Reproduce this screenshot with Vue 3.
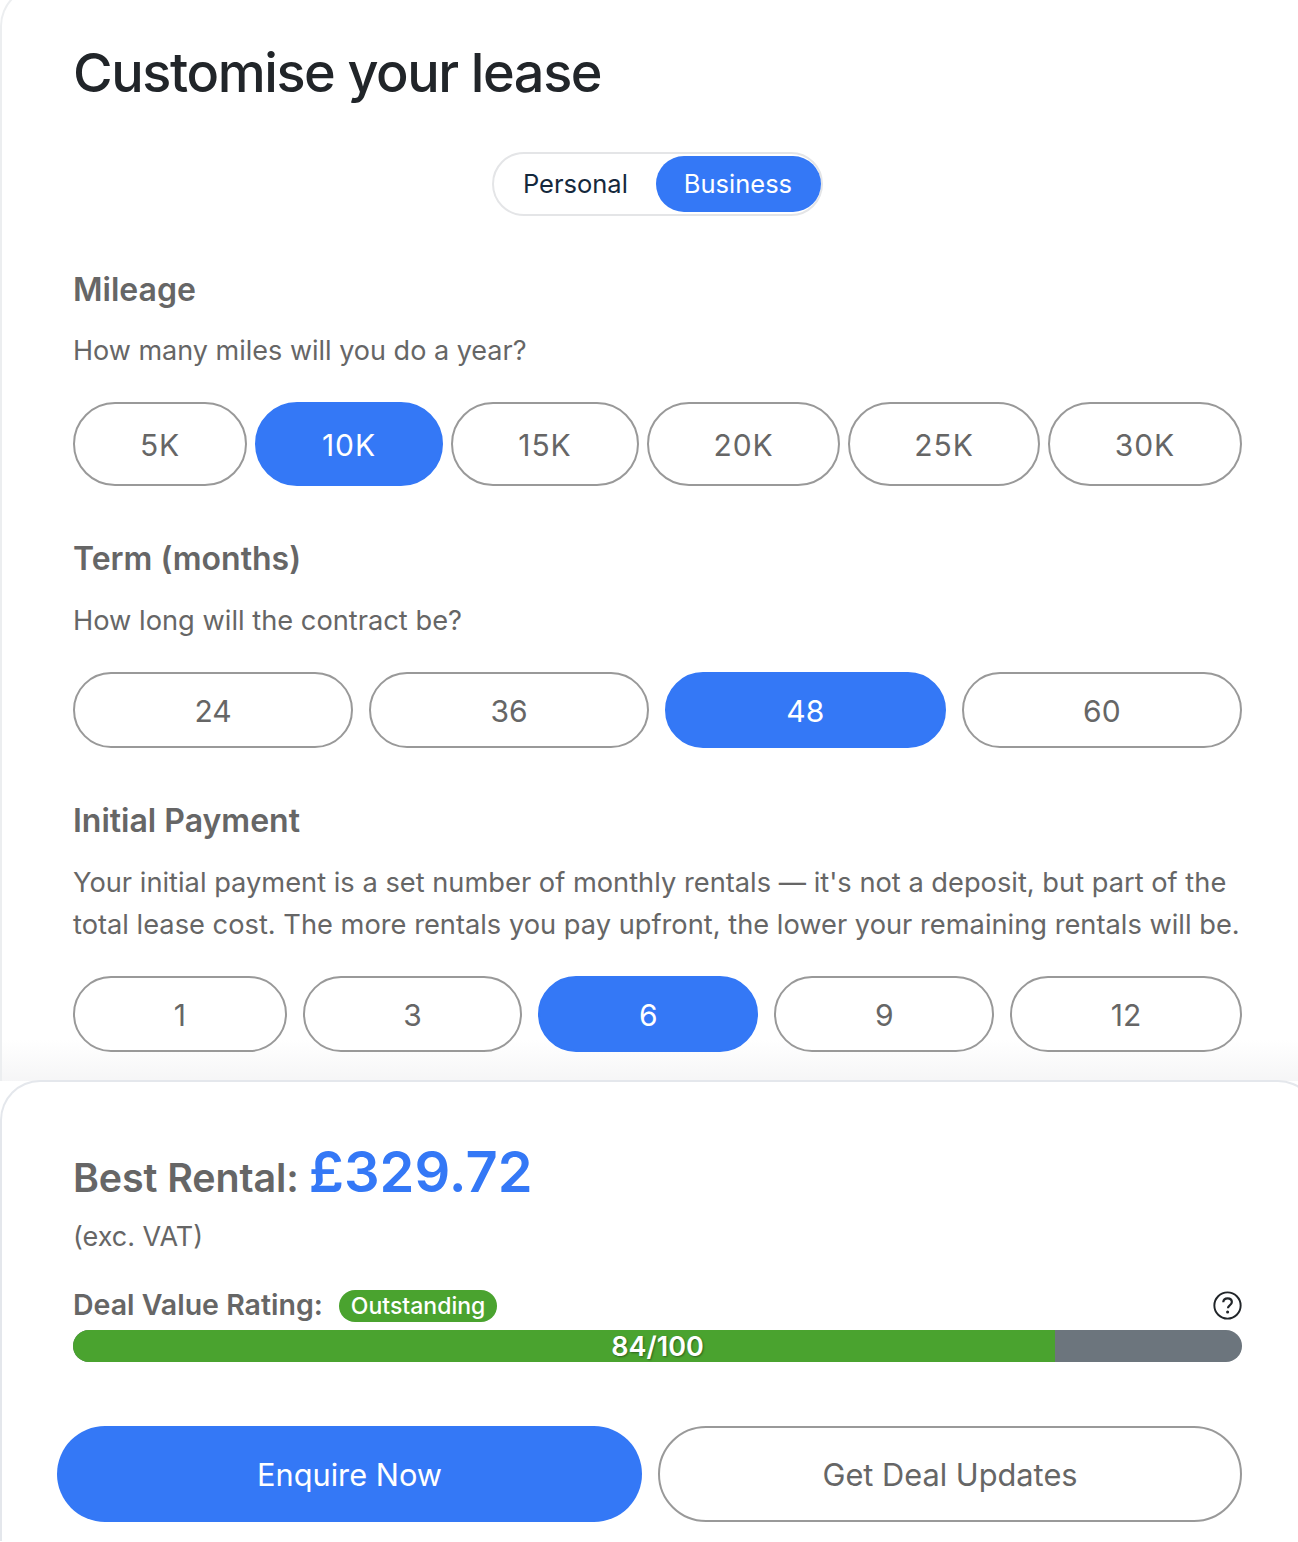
<script setup>
const mileage = [['5K', false], ['10K', true], ['15K', false], ['20K', false], ['25K', false], ['30K', false]]
const term = [['24', false], ['36', false], ['48', true], ['60', false]]
const initial = [['1', false], ['3', false], ['6', true], ['9', false], ['12', false]]
</script>

<template>
  <div class="page">
    <section class="card">
      <h1 class="title">Customise your lease</h1>
      <div class="toggle-wrap">
        <div class="toggle">
          <span class="tog">Personal</span>
          <span class="tog on">Business</span>
        </div>
      </div>

      <h2 class="label first">Mileage</h2>
      <p class="desc tight">How many miles will you do a year?</p>
      <div class="row mileage">
        <button v-for="o in mileage" :key="o[0]" class="pill" :class="{ active: o[1] }">{{ o[0] }}</button>
      </div>

      <h2 class="label next">Term (months)</h2>
      <p class="desc">How long will the contract be?</p>
      <div class="row even">
        <button v-for="o in term" :key="o[0]" class="pill short" :class="{ active: o[1] }">{{ o[0] }}</button>
      </div>

      <h2 class="label next">Initial Payment</h2>
      <p class="desc">Your initial payment is a set number of monthly rentals — it's not a deposit, but part of the total lease cost. The more rentals you pay upfront, the lower your remaining rentals will be.</p>
      <div class="row even">
        <button v-for="o in initial" :key="o[0]" class="pill short" :class="{ active: o[1] }">{{ o[0] }}</button>
      </div>
    </section>

    <section class="summary">
      <div class="price-line">
        <span class="best">Best Rental:</span>
        <span class="price">£329.72</span>
      </div>
      <div class="vat">(exc. VAT)</div>
      <div class="rating-line">
        <span class="rating-label">Deal Value Rating:</span>
        <span class="badge">Outstanding</span>
        <svg class="help" viewBox="0 0 30 30" width="29" height="29" aria-hidden="true">
          <circle cx="15" cy="15" r="13.6" fill="none" stroke="#212529" stroke-width="2" />
          <path d="M10.6 11.6c.2-2.6 2.1-4 4.500-4 2.500 0 4.400 1.500 4.400 3.800 0 1.700-.9 2.600-2.200 3.500-1.300.9-1.800 1.500-1.800 3" fill="none" stroke="#212529" stroke-width="2.300" />
          <circle cx="15.100" cy="21.800" r="1.600" fill="#212529" />
        </svg>
      </div>
      <div class="bar">
        <div class="fill"></div>
        <span class="score">84/100</span>
      </div>
      <div class="actions">
        <button class="cta primary">Enquire Now</button>
        <button class="cta ghost">Get Deal Updates</button>
      </div>
    </section>
  </div>
</template>

<style scoped>
.page {
  width: 1298px;
  height: 1542px;
  overflow: hidden;
  background: #fff;
  font-family: Inter, "Liberation Sans", sans-serif;
}
.card {
  height: 1095px;
  box-sizing: border-box;
  margin-top: -14px;
  padding: 14px 56px 0 71px;
  border-left: 2px solid #eceef0;
  border-top: 2px solid #eceef0;
  border-top-left-radius: 40px;
  background: linear-gradient(to bottom, #fff 0, #fff 1052px, #f5f5f6 1095px);
}
.title {
  margin: 0;
  padding-top: 40px;
  font-size: 54px;
  line-height: 62px;
  font-weight: 500;
  letter-spacing: -1.4px;
  color: #212529;
}
.toggle-wrap {
  display: flex;
  justify-content: center;
  margin-top: 48px;
}
.toggle {
  display: flex;
  align-items: center;
  box-sizing: border-box;
  height: 64px;
  border: 2px solid #e4e5e7;
  border-radius: 32px;
  background: #fff;
}
.tog {
  height: 56px;
  line-height: 56px;
  padding: 0 28px 0 29px;
  font-size: 25.5px;
  border-radius: 28px;
  color: #14283c;
}
.tog.on {
  padding: 0 29px 0 28px;
  background: #3478f6;
  color: #fff;
}
.label {
  margin: 0;
  font-size: 32px;
  line-height: 36px;
  font-weight: 600;
  color: #666;
}
.label.first { margin-top: 56px; }
.label.next { margin-top: 55px; }
.desc {
  margin: 23px 0 0;
  font-size: 27.25px;
  line-height: 42px;
  color: #666;
}
.desc.tight {
  margin-top: 22px;
  font-size: 27px;
}
.row {
  display: flex;
  gap: 8px;
  margin-top: 30px;
}
.row.mileage {
  display: grid;
  grid-template-columns: 174fr 188fr 188fr 193fr 192fr 194fr;
}
.row.even { gap: 16px; }
.pill {
  flex: 1 1 auto;
  box-sizing: border-box;
  height: 84px;
  padding: 2px 38px 0;
  border: 2px solid #999;
  border-radius: 42px;
  background: #fff;
  font-family: inherit;
  font-size: 30px;
  letter-spacing: 0.9px;
  color: #666;
}
.pill.short {
  height: 76px;
  padding: 2px 40px 0;
  border-radius: 38px;
  letter-spacing: 0;
}
.pill.active {
  background: #3478f6;
  border-color: #3478f6;
  color: #fff;
}
.summary {
  height: 461px;
  box-sizing: border-box;
  margin: -1px -20px 0 0;
  padding: 0 74px 0 71px;
  border: 2px solid #e4e7ec;
  border-bottom: none;
  border-top-left-radius: 40px;
  border-top-right-radius: 40px;
  background: #fff;
}
.price-line {
  display: flex;
  align-items: baseline;
  gap: 10px;
  padding-top: 56px;
}
.best {
  font-size: 39.4px;
  font-weight: 600;
  letter-spacing: -0.1px;
  color: #666;
}
.price {
  font-size: 56px;
  line-height: 68px;
  font-weight: 600;
  color: #3478f6;
}
.vat {
  margin-top: 13px;
  font-size: 27px;
  line-height: 36px;
  color: #666;
}
.rating-line {
  display: flex;
  align-items: center;
  margin-top: 32px;
  height: 36px;
}
.rating-label {
  margin-bottom: 2px;
  font-size: 28.5px;
  font-weight: 600;
  color: #666;
}
.badge {
  margin: 2px 0 0 16px;
  height: 32px;
  line-height: 32px;
  padding: 0 12px;
  border-radius: 16px;
  background: #4aa32f;
  color: #fff;
  font-size: 23px;
  font-weight: 500;
}
.help {
  margin-left: auto;
}
.bar {
  position: relative;
  height: 32px;
  margin-top: 7px;
  border-radius: 16px;
  overflow: hidden;
  background: #6c757d;
}
.fill {
  height: 100%;
  width: 84%;
  background: #4aa32f;
}
.score {
  position: absolute;
  inset: 0;
  text-align: center;
  line-height: 34px;
  font-size: 27px;
  font-weight: 600;
  color: #fff;
  text-shadow: 1px 1px 2px rgba(0, 0, 0, 0.4);
}
.actions {
  display: flex;
  gap: 16px;
  margin: 64px 0 0 -16px;
}
.cta {
  box-sizing: border-box;
  height: 96px;
  padding: 0;
  border-radius: 48px;
  font-family: inherit;
  font-size: 30.75px;
}
.primary {
  flex: 0 0 585px;
  background: #3478f6;
  border: none;
  color: #fff;
}
.ghost {
  flex: 1 1 0;
  background: #fff;
  border: 2px solid #999;
  color: #666;
}
</style>
